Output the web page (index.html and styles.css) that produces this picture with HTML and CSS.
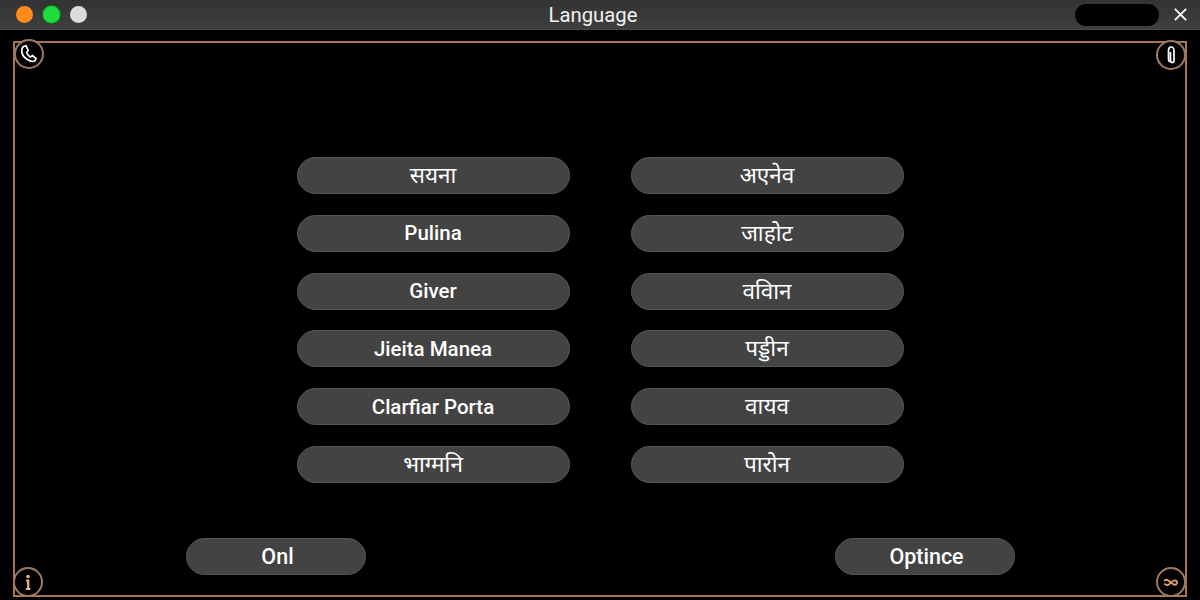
FILE: index.html
```html
<!DOCTYPE html>
<html lang="en">
<head>
<meta charset="utf-8">
<title>Language</title>
<link rel="stylesheet" href="styles.css">
</head>
<body>
<header class="titlebar">
  <div class="lights">
    <span class="light orange"></span>
    <span class="light green"></span>
    <span class="light white"></span>
  </div>
  <h1 class="title">Language</h1>
  <div class="actions">
    <span class="pill"></span>
    <svg class="close" viewBox="0 0 16 16"><path d="M2 2 14 14M14 2 2 14"/></svg>
  </div>
</header>
<main class="frame">
  <span class="corner tl"><svg viewBox="0 0 20 20"><path class="white-line" d="M4.500 2.500 7 1.800 9.200 6.500 7.500 8.500c.8 2 2 3.400 4 4.500l2-1.500 3.500 3-1 2.300c-2 1.300-5 .5-8-1.500C4.500 13 2.500 9.500 2.800 6c.1-1.500.6-2.700 1.700-3.500z"/></svg></span>
  <span class="corner tr"><svg viewBox="0 0 20 20"><path class="white-line" d="M7.500 14V6c0-2.500 1-4 2.500-4s3 1.500 3 4v9c0 1.500-.8 2.500-1.800 2.500S9.500 16.500 9.500 15V7M7.500 14c0 1.500.5 2.500 1 3"/></svg></span>
  <span class="corner bl"><svg viewBox="0 0 20 20"><circle class="dot" cx="10" cy="4.500" r="1.800"/><path class="stem" d="M8 8.500h2.200V17M8 17h4.500"/></svg></span>
  <span class="corner br"><svg viewBox="0 0 20 20"><path class="orange-line" d="M3 9c2-2 4-1 5 0l4 3c1.500 1 3 1 4-.5 1-2-1-3.500-3-3-2 .5-3 2-5 4-1.500 1.200-4 .5-4.500-1"/></svg></span>
  <div class="options">
    <button class="btn hi">सयना</button>
    <button class="btn hi">अएनेव</button>
    <button class="btn">Pulina</button>
    <button class="btn hi">जाहोट</button>
    <button class="btn">Giver</button>
    <button class="btn hi">वविान</button>
    <button class="btn">Jieita Manea</button>
    <button class="btn hi">पड्डीन</button>
    <button class="btn">Clarfiar Porta</button>
    <button class="btn hi">वायव</button>
    <button class="btn hi">भाग्मनि</button>
    <button class="btn hi">पारोन</button>
  </div>
  <div class="footer">
    <button class="btn wide">Onl</button>
    <button class="btn wide">Optince</button>
  </div>
</main>
</body>
</html>
```
FILE: styles.css
```css
* { box-sizing: border-box; }
html, body { margin: 0; height: 100%; }
body {
  width: 1200px;
  height: 600px;
  overflow: hidden;
  background: #000;
  color: #fff;
  font-family: Roboto, "Noto Sans", sans-serif;
}
.titlebar {
  height: 30px;
  background: linear-gradient(#333, #3f3f3f);
  border-bottom: 1px solid #4a4a4a;
  display: grid;
  grid-template-columns: 1fr auto 1fr;
  align-items: center;
  padding: 0 12px 0 16px;
}
.lights { display: flex; gap: 10px; }
.light { width: 17px; height: 17px; border-radius: 50%; }
.orange { background: #ff8c1a; }
.green { background: #1fdc3c; box-shadow: 0 0 0 1px #0d7a22; }
.white { background: #dcdce0; }
.title {
  margin: 0 18px 0 0;
  font-size: 20.300px;
  font-weight: 400;
  color: #f2f2f2;
}
.actions { display: flex; justify-content: flex-end; align-items: center; gap: 14px; }
.pill { width: 84px; height: 22px; border-radius: 11px; background: #000; }
.close { width: 15px; height: 15px; fill: none; stroke: #fff; stroke-width: 2; }
.frame {
  position: relative;
  margin: 11px 13px 0;
  height: 556px;
  border: 2px solid #a8754f;
  padding-top: 114px;
}
.corner {
  position: absolute;
  width: 30px;
  height: 30px;
  border: 2px solid #a07a5e;
  border-radius: 50%;
  background: #000;
  display: flex;
  align-items: center;
  justify-content: center;
}
.corner svg { width: 20px; height: 20px; fill: none; }
.tl { left: -1px; top: -4px; }
.tr { right: -1px; top: -3px; }
.bl { left: -2px; bottom: -2px; }
.br { right: -1px; bottom: -2px; }
.white-line { stroke: #fff; stroke-width: 1.700; fill: none; }
.orange-line { stroke: #e5a56f; stroke-width: 1.700; fill: none; }
.stem { stroke: #e8b48a; stroke-width: 2.200; fill: none; }
.dot { fill: #e8b48a; }
.options {
  display: grid;
  grid-template-columns: 273px 273px;
  grid-auto-rows: 37px;
  column-gap: 61px;
  row-gap: 20.800px;
  justify-content: center;
}
.btn {
  border: 1px solid #555;
  border-radius: 19px;
  background: #434343;
  color: #fff;
  font-family: inherit;
  font-size: 20.500px;
  font-weight: 500;
  padding: 0;
}
.hi { font-size: 22.500px; font-weight: 400; padding-bottom: 2px; }
.footer {
  display: flex;
  justify-content: space-between;
  padding: 0 170px 0 171px;
  margin-top: 55px;
}
.wide { width: 180px; height: 37px; font-size: 21.500px; padding-left: 3px; }
```
